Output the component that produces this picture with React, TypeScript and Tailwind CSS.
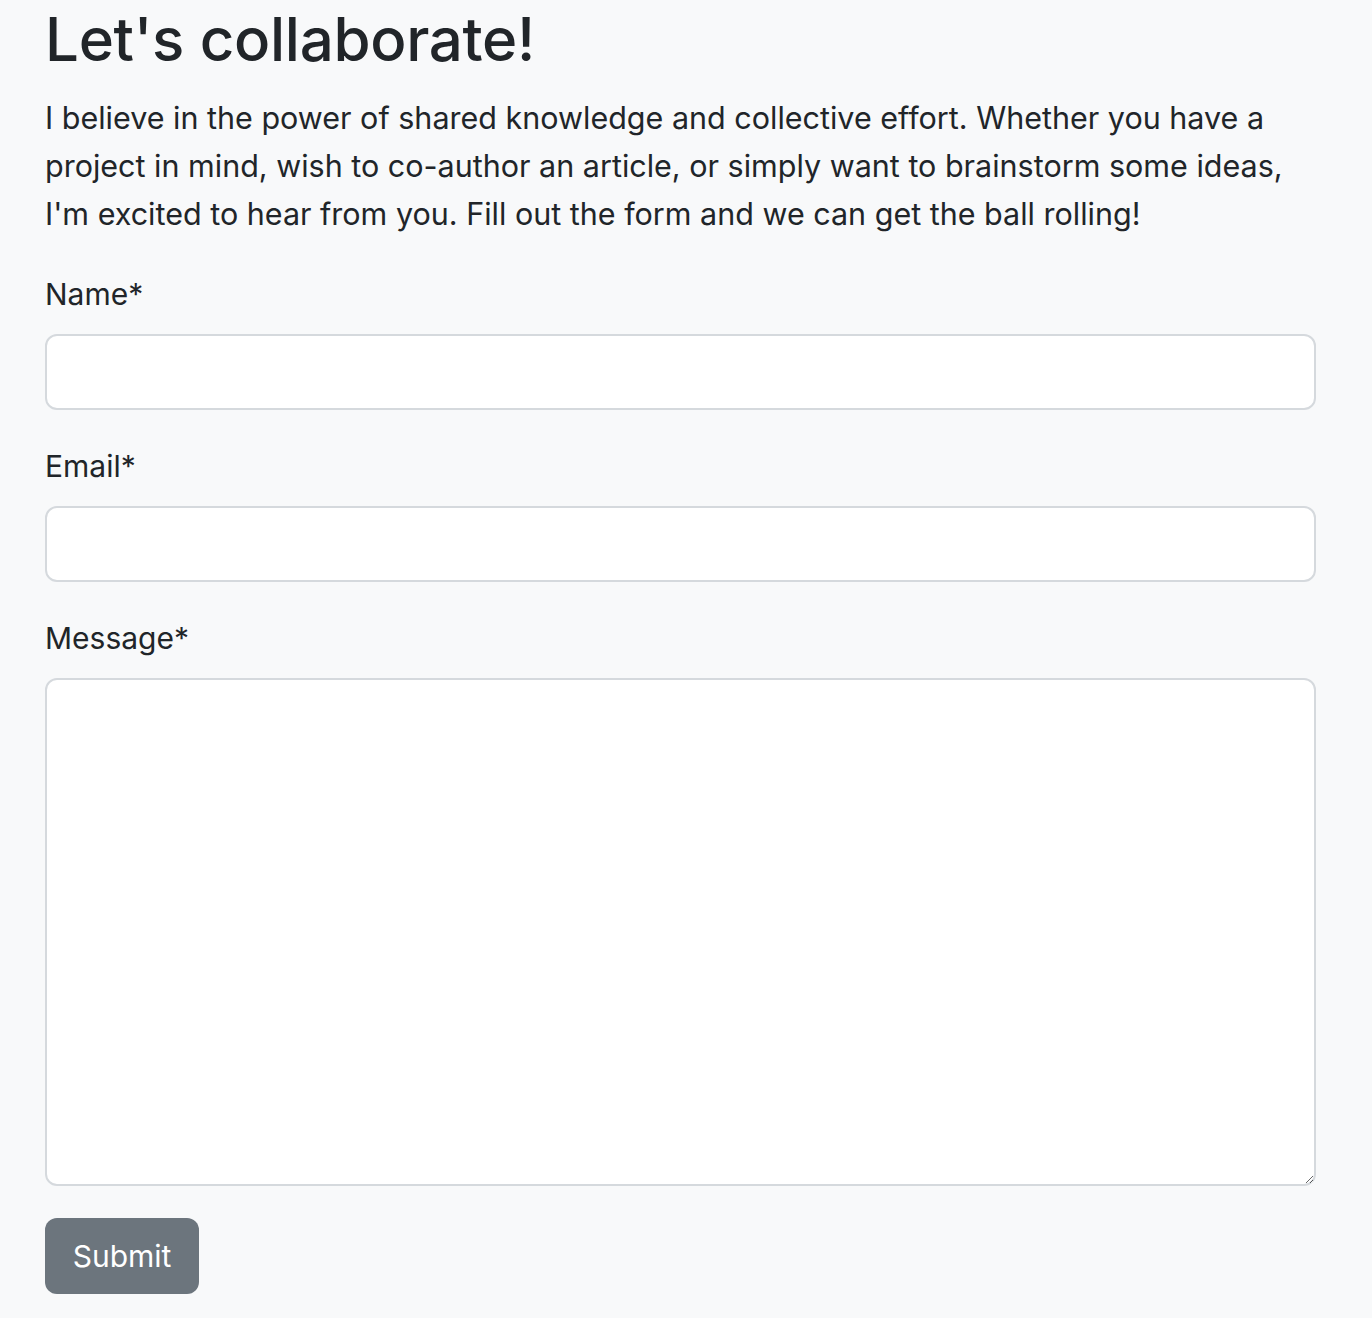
export default function App() {
  return (
    <div
      className="min-h-[1318px] bg-[#f8f9fa] pl-[45px] pr-[56px] text-[#212529]"
      style={{ fontFamily: 'Inter, "Noto Sans", sans-serif' }}
    >
      <h1 className="mb-4 text-[60px] font-medium leading-[78px] tracking-[-0.3px]">Let's collaborate!</h1>
      <p className="mb-8 text-[30.5px] leading-[48px]">
        I believe in the power of shared knowledge and collective effort. Whether you have a project in mind, wish to
        co-author an article, or simply want to brainstorm some ideas, I'm excited to hear from you. Fill out the form
        and we can get the ball rolling!
      </p>
      <form onSubmit={(e) => e.preventDefault()}>
        <div className="mb-8">
          <label htmlFor="name" className="mb-4 block text-[30px] leading-[48px]">
            Name*
          </label>
          <input
            id="name"
            type="text"
            className="block h-[76px] w-full rounded-[12px] border-2 border-[#d5d9dd] bg-white px-6 text-[30px] outline-none"
          />
        </div>
        <div className="mb-8">
          <label htmlFor="email" className="mb-4 block text-[30px] leading-[48px]">
            Email*
          </label>
          <input
            id="email"
            type="email"
            className="block h-[76px] w-full rounded-[12px] border-2 border-[#d5d9dd] bg-white px-6 text-[30px] outline-none"
          />
        </div>
        <div className="mb-8">
          <label htmlFor="message" className="mb-4 block text-[30px] leading-[48px]">
            Message*
          </label>
          <textarea
            id="message"
            className="block h-[508px] w-full rounded-[12px] border-2 border-[#d5d9dd] bg-white px-6 py-3 text-[30px] outline-none"
          />
        </div>
        <button
          type="submit"
          className="h-[76px] w-[154px] rounded-[12px] bg-[#6c757d] text-[30px] text-white"
        >
          Submit
        </button>
      </form>
    </div>
  )
}
